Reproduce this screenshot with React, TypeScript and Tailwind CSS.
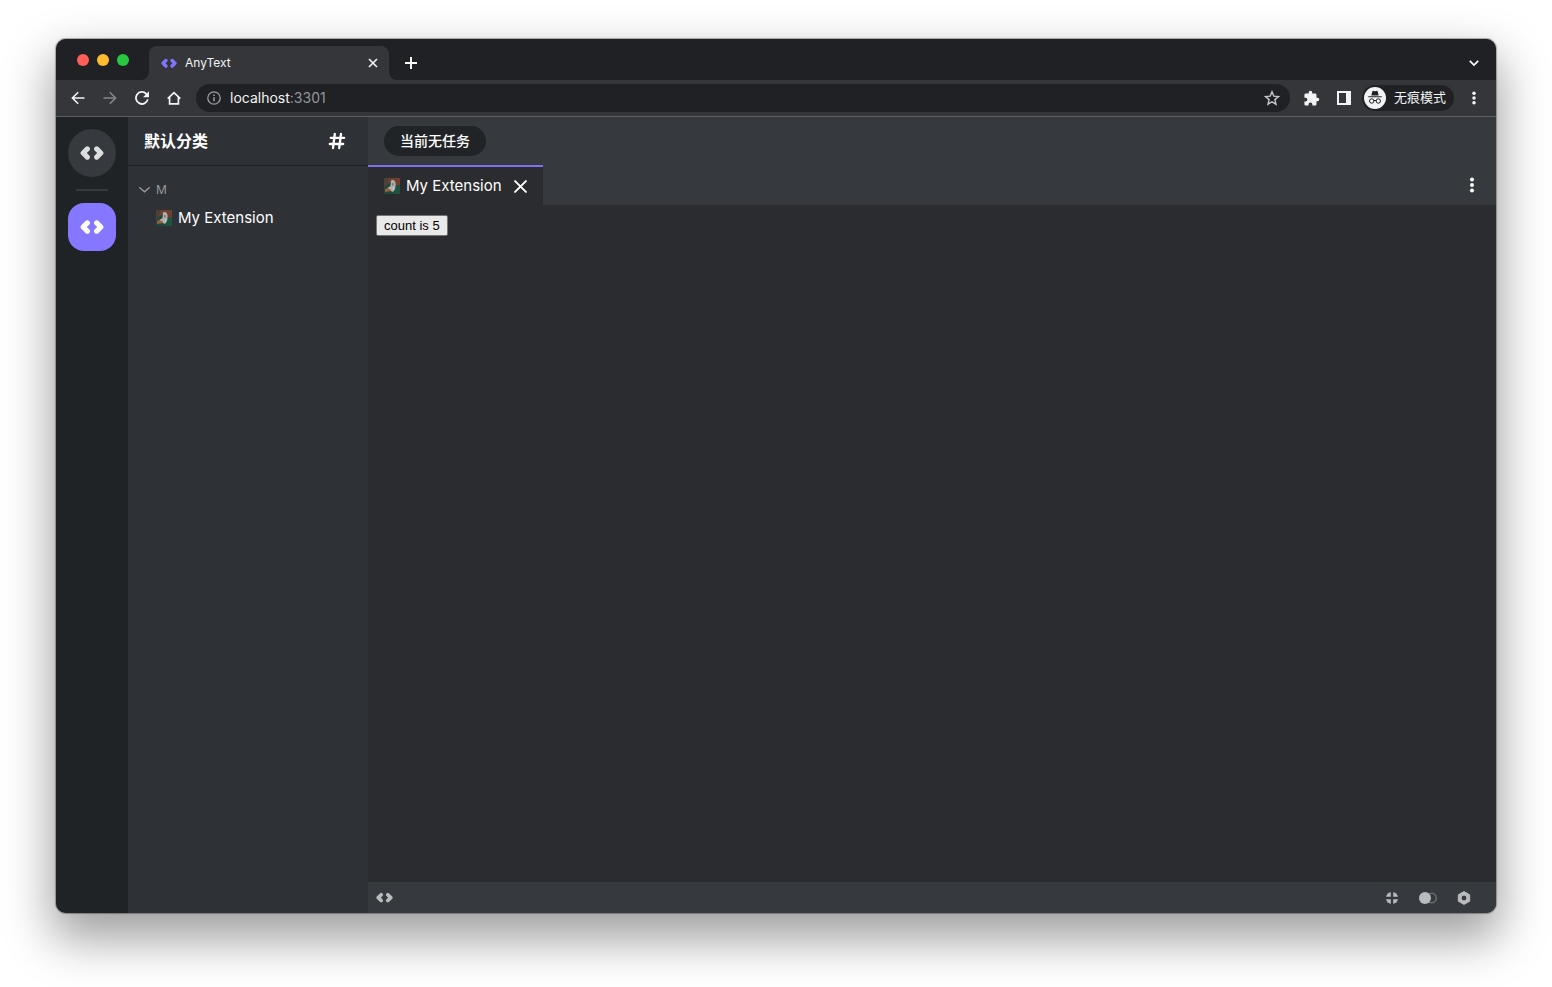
import React, { useState } from "react";

const WINDOW_FONT = "font-[Inter,'Noto_Sans_CJK_SC',sans-serif]";

function CodeIcon({ className }: { className?: string }) {
  return (
    <svg viewBox="0 0 24 16" className={className} fill="none" stroke="currentColor" strokeWidth="5.200" strokeLinecap="round" strokeLinejoin="round" aria-hidden="true">
      <path d="M7.300 3.900L3.200 8l4.100 4.100" />
      <path d="M16.700 3.900L20.800 8l-4.100 4.100" />
    </svg>
  );
}

function ExtensionLogo() {
  return (
    <svg viewBox="0 0 16 16" className="size-4 shrink-0" aria-hidden="true">
      <rect width="16" height="16" fill="#23463a" />
      <path d="M0 0h16v7l-4 1-3-4-4 1-5 4z" fill="#70402f" />
      <path d="M0 0h5L3 7 0 10z" fill="#4b4038" />
      <path d="M11 9l5-2v9H9z" fill="#1b5542" />
      <path d="M1 11l5-2 1 4-6 1z" fill="#93603a" />
      <path d="M7 2.500c2-1.500 4.500 0 4.500 3 .3 3-.2 6-2 8-1.500.8-3-.3-3-2L3.500 10l3-2z" fill="#b0b1ac" />
      <path d="M8.200 4.800l1.600.7-.4 2.300-1.500-.4z" fill="#757b77" />
      <path d="M9 9l1.500 1-1 2.500z" fill="#d3d3cd" />
    </svg>
  );
}

function DotsIcon({ className }: { className?: string }) {
  return (
    <svg viewBox="0 0 16 16" className={className} fill="currentColor" aria-hidden="true">
      <circle cx="8" cy="2.500" r="2" />
      <circle cx="8" cy="8" r="2" />
      <circle cx="8" cy="13.500" r="2" />
    </svg>
  );
}

function IconButton({ label, className = "", children }: { label: string; className?: string; children: React.ReactNode }) {
  return (
    <button type="button" aria-label={label} className={`flex size-7 shrink-0 items-center justify-center rounded-full ${className}`}>
      {children}
    </button>
  );
}

function TabStrip() {
  return (
    <div className="flex h-[41px] shrink-0 items-end bg-[#202124] pr-2 pl-[21px]">
      <div className="flex gap-2 self-center">
        <span className="size-3 rounded-full bg-[#ff5f57]" />
        <span className="size-3 rounded-full bg-[#febc2e]" />
        <span className="size-3 rounded-full bg-[#28c840]" />
      </div>
      <svg viewBox="0 0 8 8" className="ml-3 size-2" fill="#35363a" aria-hidden="true">
        <path d="M8 0v8H0a8 8 0 0 0 8-8z" />
      </svg>
      <div className="flex h-[34px] w-60 items-center rounded-t-lg bg-[#35363a] pr-2 pl-3 text-[#f1f3f4]">
        <CodeIcon className="w-4 text-[#8375fb]" />
        <span className="ml-2 flex-1 text-xs">AnyText</span>
        <button type="button" aria-label="Close tab" className="flex size-4 items-center justify-center">
          <svg viewBox="0 0 10 10" className="size-[10px]" stroke="currentColor" strokeWidth="1.600" aria-hidden="true">
            <path d="M1 1l8 8M9 1L1 9" />
          </svg>
        </button>
      </div>
      <svg viewBox="0 0 8 8" className="size-2" fill="#35363a" aria-hidden="true">
        <path d="M0 0v8h8a8 8 0 0 1-8-8z" />
      </svg>
      <div className="flex h-[34px] flex-1 items-center justify-between text-white">
        <IconButton label="New tab">
          <svg viewBox="0 0 12 12" className="size-3" stroke="currentColor" strokeWidth="1.900" aria-hidden="true">
            <path d="M6 0v12M0 6h12" />
          </svg>
        </IconButton>
        <IconButton label="Search tabs">
          <svg viewBox="0 0 10 6" className="w-[10px]" fill="none" stroke="currentColor" strokeWidth="1.700" aria-hidden="true">
            <path d="M.8.8L5 5 9.200.8" />
          </svg>
        </IconButton>
      </div>
    </div>
  );
}

function Toolbar() {
  return (
    <div className="flex h-[37px] shrink-0 items-center gap-1 border-b border-[#5c5d60] bg-[#35363a] px-2 text-[#f1f3f4]">
      <IconButton label="Back">
        <svg viewBox="0 0 14 14" className="size-[14px]" fill="none" stroke="currentColor" strokeWidth="1.600" aria-hidden="true">
          <path d="M13.500 7H1.500M7.200 1.200L1.400 7l5.800 5.800" />
        </svg>
      </IconButton>
      <IconButton label="Forward" className="text-[#85868a]">
        <svg viewBox="0 0 14 14" className="size-[14px]" fill="none" stroke="currentColor" strokeWidth="1.600" aria-hidden="true">
          <path d="M.5 7h12M6.800 1.200L12.600 7l-5.800 5.800" />
        </svg>
      </IconButton>
      <IconButton label="Reload">
        <svg viewBox="0 0 14 14" className="size-[14px]" fill="none" stroke="currentColor" strokeWidth="1.800" aria-hidden="true">
          <path d="M12.800 8.400A6 6 0 1 1 11.300 2.800L12.800 4.500" />
          <path d="M14 .3v6H8z" fill="currentColor" stroke="none" />
        </svg>
      </IconButton>
      <IconButton label="Home">
        <svg viewBox="0 0 14 14" className="size-[14px]" fill="none" stroke="currentColor" strokeWidth="1.700" aria-hidden="true">
          <path d="M.7 7.600L7 1.600l6.300 6M2.600 6v6.900h8.800V6" />
        </svg>
      </IconButton>
      <div className="ml-1 flex h-7 flex-1 items-center rounded-full bg-[#202124] pr-1 pl-[11px]">
        <svg viewBox="0 0 14 14" className="size-[14px]" fill="none" stroke="#9aa0a6" strokeWidth="1.300" aria-hidden="true">
          <circle cx="7" cy="7" r="6.200" />
          <path d="M7 6.200v4M7 3.500v1.500" strokeWidth="1.500" />
        </svg>
        <p className="ml-[9px] flex-1 text-sm text-[#f1f3f4]">
          localhost<span className="text-[#94969a]">:3301</span>
        </p>
        <IconButton label="Bookmark" className="text-[#c6c7ca]">
          <svg viewBox="0 0 16 16" className="size-4" fill="none" stroke="currentColor" strokeWidth="1.400" aria-hidden="true">
            <path d="M8 1.800l1.800 4.300 4.700.4-3.600 3.100 1.100 4.600L8 11.800l-4 2.400 1.100-4.600-3.600-3.100 4.700-.4z" />
          </svg>
        </IconButton>
      </div>
      <IconButton label="Extensions" className="ml-1">
        <svg viewBox="0 0 24 24" className="size-[17px]" fill="currentColor" aria-hidden="true">
          <path d="M20.500 11H19V7a2 2 0 0 0-2-2h-4V3.500a2.500 2.500 0 0 0-5 0V5H4a2 2 0 0 0-2 2v3.800h1.500a2.700 2.700 0 0 1 0 5.400H2V20a2 2 0 0 0 2 2h3.800v-1.500a2.700 2.700 0 0 1 5.400 0V22H17a2 2 0 0 0 2-2v-4h1.500a2.500 2.500 0 0 0 0-5z" />
        </svg>
      </IconButton>
      <IconButton label="Side panel">
        <svg viewBox="0 0 14 14" className="size-[14px]" aria-hidden="true">
          <path fill="currentColor" fillRule="evenodd" d="M0 0h14v14H0zM2 2v10h7V2z" />
        </svg>
      </IconButton>
      <button type="button" className="mr-[2px] flex h-[26px] shrink-0 items-center rounded-full bg-[#202124] pr-2 pl-[2px] text-[13px]">
        <svg viewBox="0 0 22 22" className="mr-2 size-[22px]" fill="none" aria-hidden="true">
          <circle cx="11" cy="11" r="11" fill="#f1f3f4" />
          <path d="M7.300 8.500l1-4c.2-.6.8-.8 1.300-.6l1.400.4 1.400-.4c.5-.2 1.100 0 1.300.6l1 4z" fill="#202124" />
          <path d="M4.300 9.700h13.400" stroke="#202124" strokeWidth="1.100" />
          <circle cx="7.700" cy="14" r="2.200" stroke="#202124" />
          <circle cx="14.300" cy="14" r="2.200" stroke="#202124" />
          <path d="M9.900 13.700q1.100-.7 2.200 0" stroke="#202124" />
        </svg>
        无痕模式
      </button>
      <IconButton label="Menu">
        <DotsIcon className="size-[14px]" />
      </IconButton>
    </div>
  );
}

function Rail() {
  return (
    <nav className="flex w-[72px] shrink-0 flex-col items-center gap-3 bg-[#1f2326] py-3">
      <button type="button" aria-label="Home" className="flex size-12 items-center justify-center rounded-full bg-[#36393d] text-[#dcddde]">
        <CodeIcon className="w-6" />
      </button>
      <hr className="h-[2px] w-8 rounded-full border-0 bg-[#36393d]" />
      <button type="button" aria-label="Default category" className="flex size-12 items-center justify-center rounded-2xl bg-[#8577ff] text-white">
        <CodeIcon className="w-6" />
      </button>
    </nav>
  );
}

function CategoryPanel() {
  const [open, setOpen] = useState(true);

  return (
    <aside className="flex w-60 shrink-0 flex-col bg-[#2e3136]">
      <header className="flex h-[49px] items-center justify-between border-b border-[#212327] pr-[22px] pl-4">
        <h1 className="text-base font-bold text-white">默认分类</h1>
        <button type="button" aria-label="Channels" className="text-white">
          <svg viewBox="0 0 18 18" className="size-[18px]" fill="none" stroke="currentColor" strokeWidth="2.300" strokeLinecap="round" aria-hidden="true">
            <path d="M6.800 2L5 16M13 2l-1.800 14M2.800 5.800h13.400M1.800 12h13.400" />
          </svg>
        </button>
      </header>
      <button type="button" aria-expanded={open} onClick={() => setOpen(!open)} className="mt-3 flex h-6 items-center gap-[6px] pl-[11px] text-xs text-[#96989d]">
        <svg viewBox="0 0 11 6" className="w-[11px]" fill="none" stroke="currentColor" strokeWidth="1.400" strokeLinecap="round" aria-hidden="true">
          <path d="M.8.800L5.500 4.800 10.200.800" />
        </svg>
        M
      </button>
      {open && (
        <a href="#my-extension" className="flex h-8 items-center gap-[6px] pl-7 text-[15px] text-white">
          <ExtensionLogo />
          My Extension
        </a>
      )}
    </aside>
  );
}

function Workspace() {
  const [count, setCount] = useState(5);

  return (
    <main className="flex min-w-0 flex-1 flex-col bg-[#2b2c2f]">
      <header className="flex h-12 shrink-0 items-center bg-[#36393e] px-4">
        <span className="flex h-[30px] items-center rounded-full bg-[#202427] px-4 text-sm font-medium text-white">当前无任务</span>
      </header>
      <div className="flex h-10 shrink-0 items-stretch justify-between bg-[#36393e] pr-4">
        <div className="flex items-center gap-[6px] border-t-2 border-[#8070f0] bg-[#2b2c2f] px-4 text-[15px] text-white">
          <ExtensionLogo />
          <span>My Extension</span>
          <button type="button" aria-label="Close" className="ml-[6px]">
            <svg viewBox="0 0 12 12" className="size-[13px]" stroke="currentColor" strokeWidth="1.800" strokeLinecap="round" aria-hidden="true">
              <path d="M1 1l10 10M11 1L1 11" />
            </svg>
          </button>
        </div>
        <button type="button" aria-label="More" className="w-4 text-white">
          <DotsIcon className="size-4" />
        </button>
      </div>
      <div className="flex flex-1 items-start px-2 py-[10px]">
        <button type="button" onClick={() => setCount(count + 1)} className="rounded-xs border border-[#767676] bg-[#e9e9e9] px-[7px] font-['Liberation_Sans',sans-serif] text-[13px] leading-[19px] text-black">
          count is {count}
        </button>
      </div>
      <footer className="flex h-[31px] shrink-0 items-center bg-[#36393e] pr-[18px] pl-2 text-[#b9bbbe]">
        <CodeIcon className="w-[17px]" />
        <div className="ml-auto flex gap-2">
          <IconButton label="Exit full screen">
            <svg viewBox="0 0 12 12" className="size-3" fill="currentColor" aria-hidden="true">
              <path d="M3.600.2h1.200v4.600H.2V3.600L1.500 3 .9 2.100 2.100.9l.9.600zM8.400.2H7.200v4.600h4.600V3.600L10.500 3l.6-.9L9.900.9 9 1.500zM3.600 11.800h1.200V7.200H.2v1.200l1.300.6-.6.9 1.200 1.200.9-.6zM8.400 11.800H7.200V7.200h4.600v1.200l-1.300.6.6.9-1.200 1.200-.9-.6z" />
            </svg>
          </IconButton>
          <IconButton label="Theme">
            <svg viewBox="0 0 20 12" className="w-5" fill="none" aria-hidden="true">
              <circle cx="13.500" cy="6" r="4.800" stroke="#6a6d72" strokeWidth="1.500" />
              <circle cx="7" cy="6" r="6" fill="currentColor" />
            </svg>
          </IconButton>
          <IconButton label="Settings">
            <svg viewBox="0 0 14 14" className="size-[14px]" fill="currentColor" stroke="currentColor" strokeLinejoin="round" aria-hidden="true">
              <path fillRule="evenodd" d="M7 .6l5.700 3.200v6.400L7 13.400 1.300 10.200V3.800zM7 4.100a2.900 2.900 0 1 0 0 5.800 2.900 2.900 0 0 0 0-5.800z" />
            </svg>
          </IconButton>
        </div>
      </footer>
    </main>
  );
}

export default function App() {
  return (
    <div className={`flex h-screen bg-white px-14 pt-[39px] pb-[74px] ${WINDOW_FONT}`}>
      <div className="flex min-w-0 flex-1 rounded-[10px] shadow-[0_0_1px_1px_rgba(0,0,0,0.3),0_22px_48px_4px_rgba(0,0,0,0.38)]">
        <div className="flex min-w-0 flex-1 flex-col overflow-hidden rounded-[10px] bg-[#202124]">
          <TabStrip />
          <Toolbar />
          <div className="flex min-h-0 flex-1">
            <Rail />
            <CategoryPanel />
            <Workspace />
          </div>
        </div>
      </div>
    </div>
  );
}
